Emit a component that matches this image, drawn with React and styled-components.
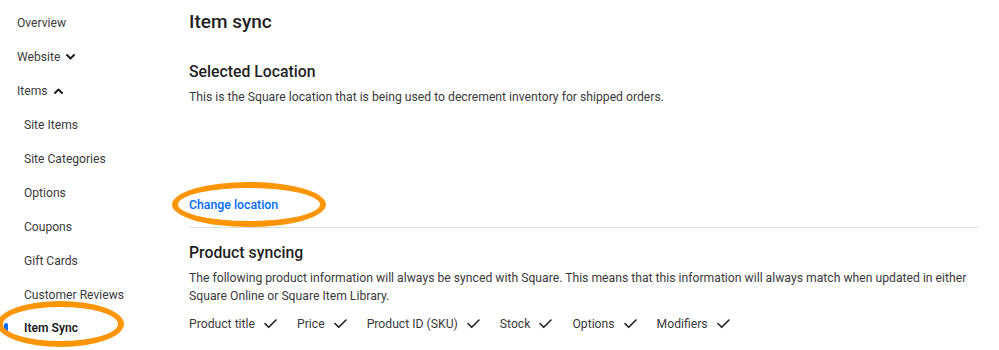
import styled, { createGlobalStyle } from "styled-components";

const GlobalStyle = createGlobalStyle`
  html, body {
    margin: 0;
    padding: 0;
    background: #fff;
  }
  body {
    font-family: Roboto, "Liberation Sans", sans-serif;
    color: #1f1f1f;
    overflow: hidden;
  }
`;

const Page = styled.div`
  display: flex;
  width: 999px;
  height: 350px;
  overflow: hidden;
`;

const Sidebar = styled.nav`
  width: 189px;
  flex-shrink: 0;
  padding-top: 6.5px;
  display: flex;
  flex-direction: column;
`;

const NavItem = styled.div`
  position: relative;
  height: 33.9px;
  display: flex;
  align-items: center;
  gap: 6px;
  padding-left: ${(p) => (p.sub ? "24px" : "17px")};
  font-size: 12.1px;
  font-weight: ${(p) => (p.active ? 600 : 400)};
  color: ${(p) => (p.active ? "#1a1a1a" : "#3b3b3b")};
  ${(p) =>
    p.active
      ? `
    &::before {
      content: "";
      position: absolute;
      left: 4px;
      top: 11px;
      width: 4px;
      height: 12px;
      border-radius: 2px;
      background: #006aff;
    }
  `
      : ""}
`;

const Ring = styled.span`
  position: absolute;
  border: 6px solid #ff9500;
  border-radius: 50%;
  pointer-events: none;
  box-sizing: border-box;
`;

const NavRing = styled(Ring)`
  left: -3px;
  top: -11px;
  width: 127px;
  height: 46px;
`;

const Main = styled.main`
  flex: 1;
  padding-right: 21px;
  display: flex;
  flex-direction: column;
`;

const Title = styled.h1`
  margin: 10px 0 0;
  font-size: 19px;
  line-height: 24px;
  font-weight: 500;
  color: #1f1f1f;
`;

const SectionTitle = styled.h2`
  margin: ${(p) => p.top || "0"} 0 0;
  font-size: 15.8px;
  line-height: 22px;
  font-weight: 500;
  color: #1f1f1f;
`;

const Text = styled.p`
  margin: ${(p) => p.top || "0"} 0 0;
  font-size: 12.2px;
  line-height: 18px;
  color: #3b3b3b;
`;

const LinkWrap = styled.div`
  position: relative;
  margin-top: 89px;
  height: 20px;
  display: flex;
  align-items: center;
`;

const Link = styled.a`
  font-size: 12.3px;
  font-weight: 500;
  color: #006aff;
  text-decoration: none;
`;

const LinkRing = styled(Ring)`
  left: -17px;
  top: -13px;
  width: 154px;
  height: 45px;
`;

const Divider = styled.hr`
  margin: 12px 0 0;
  border: none;
  border-top: 1px solid #dcdcdc;
`;

const Checks = styled.ul`
  list-style: none;
  margin: 10px 0 0;
  padding: 0;
  display: flex;
  gap: 20px;
`;

const CheckItem = styled.li`
  display: flex;
  align-items: center;
  gap: 9px;
  font-size: 12.2px;
  line-height: 18px;
  color: #3b3b3b;
`;

const Chevron = ({ up }) => (
  <svg width="9" height="6" viewBox="0 0 9 6">
    <path
      d={up ? "M1 5 L4.5 1.5 L8 5" : "M1 1 L4.5 4.5 L8 1"}
      fill="none"
      stroke="#1f1f1f"
      strokeWidth="2"
      strokeLinecap="round"
      strokeLinejoin="round"
    />
  </svg>
);

const Check = () => (
  <svg width="13" height="10" viewBox="0 0 13 10">
    <path
      d="M1 4.5 L4.7 8.3 L12 1"
      fill="none"
      stroke="#1f1f1f"
      strokeWidth="1.6"
      strokeLinecap="round"
      strokeLinejoin="round"
    />
  </svg>
);

const subItems = [
  "Site Items",
  "Site Categories",
  "Options",
  "Coupons",
  "Gift Cards",
  "Customer Reviews",
];

const synced = [
  "Product title",
  "Price",
  "Product ID (SKU)",
  "Stock",
  "Options",
  "Modifiers",
];

export default function App() {
  return (
    <Page>
      <GlobalStyle />
      <Sidebar>
        <NavItem>Overview</NavItem>
        <NavItem>
          Website <Chevron />
        </NavItem>
        <NavItem>
          Items <Chevron up />
        </NavItem>
        {subItems.map((item) => (
          <NavItem sub key={item}>
            {item}
          </NavItem>
        ))}
        <NavItem sub active>
          Item Sync
          <NavRing />
        </NavItem>
      </Sidebar>
      <Main>
        <Title>Item sync</Title>
        <SectionTitle top="27px">Selected Location</SectionTitle>
        <Text top="5px">
          This is the Square location that is being used to decrement inventory
          for shipped orders.
        </Text>
        <LinkWrap>
          <Link href="#">Change location</Link>
          <LinkRing />
        </LinkWrap>
        <Divider />
        <SectionTitle top="14px">Product syncing</SectionTitle>
        <Text top="5px">
          The following product information will always be synced with Square.
          This means that this information will always match when updated in
          either Square Online or Square Item Library.
        </Text>
        <Checks>
          {synced.map((item) => (
            <CheckItem key={item}>
              {item}
              <Check />
            </CheckItem>
          ))}
        </Checks>
      </Main>
    </Page>
  );
}
